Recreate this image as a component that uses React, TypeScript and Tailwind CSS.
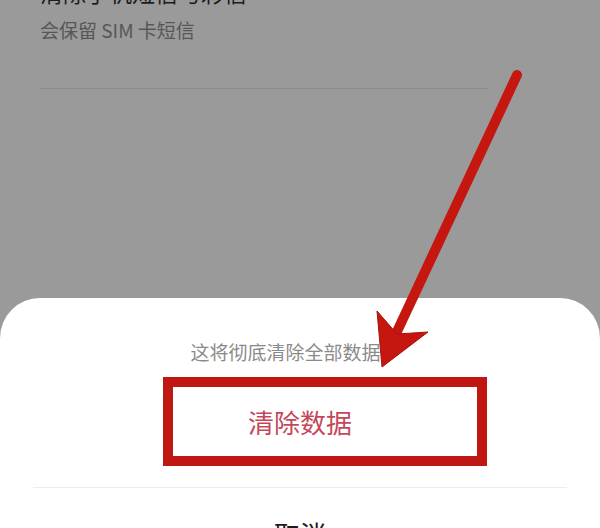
import React from "react"

const font = { fontFamily: '"Noto Sans CJK SC", "Noto Sans", sans-serif' }

function Arrow() {
  return (
    <svg
      className="pointer-events-none absolute left-0 top-0"
      width="600"
      height="528"
      viewBox="0 0 600 528"
    >
      <line
        x1="517"
        y1="75"
        x2="394"
        y2="338"
        stroke="#c5170f"
        strokeWidth="10"
        strokeLinecap="round"
      />
      <polygon
        points="382,367 377,311 397,334 428,332"
        fill="#c5170f"
        stroke="#a8120c"
        strokeWidth="1"
        strokeLinejoin="round"
      />
    </svg>
  )
}

export default function App() {
  return (
    <div
      className="relative flex h-[528px] w-[600px] flex-col overflow-hidden bg-[#9a9a9a]"
      style={font}
    >
      <div className="px-[40px]">
        <p className="-mt-[19px] text-[23px] leading-[23px] text-[#1c1c1c]">
          清除手机短信与彩信
        </p>
        <p className="mt-[14px] text-[19px] leading-[24px] text-[#575757]">
          会保留 SIM 卡短信
        </p>
        <div className="mt-[46px] h-px w-[448px] bg-[#8c8c8c]" />
      </div>

      <div className="mt-auto h-[230px] rounded-t-[40px] bg-white">
        <p className="mt-[42px] pr-[10px] text-center text-[19px] leading-[24px] text-[#8a8a8a]">
          这将彻底清除全部数据。
        </p>
        <button
          type="button"
          className="mt-[13px] flex h-[89px] w-full items-center justify-center text-[26px] leading-[34px] text-[#c4475a]"
        >
          清除数据
        </button>
        <div className="mx-[33px] mt-[21px] h-px bg-[#ececec]" />
        <p className="mt-[29px] text-center text-[26px] leading-[34px] text-[#1c1c1c]">
          取消
        </p>
      </div>

      <div className="pointer-events-none absolute left-[163px] top-[377px] h-[89px] w-[324px] border-[10px] border-[#bf1812]" />
      <Arrow />
    </div>
  )
}
